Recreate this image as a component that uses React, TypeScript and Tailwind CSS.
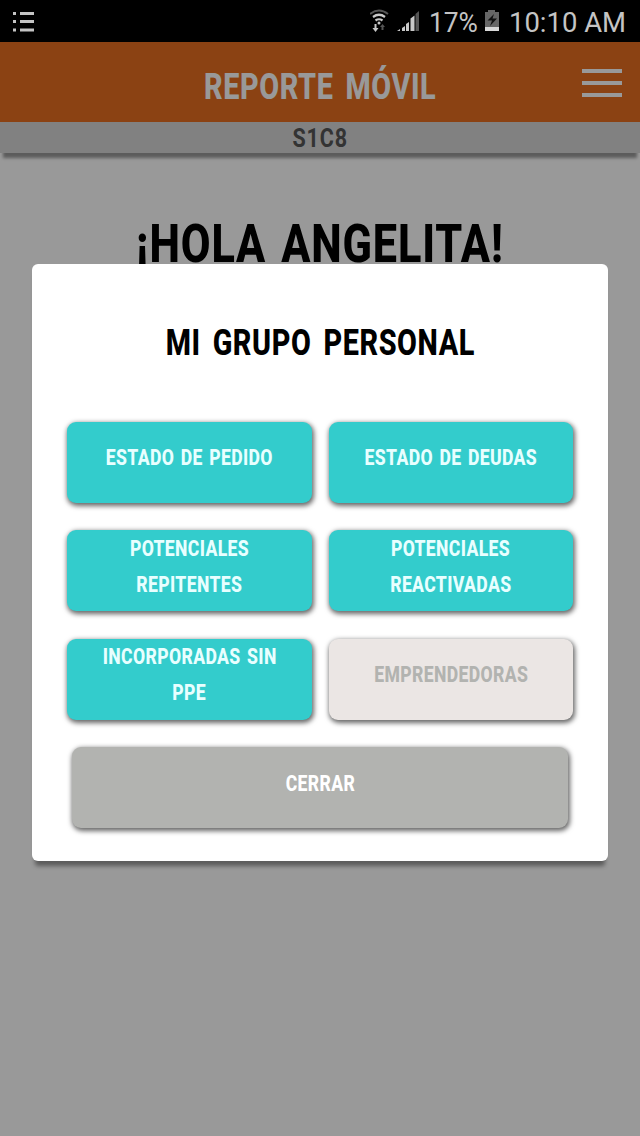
import clsx from "clsx";

type MenuOption = {
  lines: string[];
  disabled?: boolean;
};

const options: MenuOption[] = [
  { lines: ["ESTADO DE PEDIDO"] },
  { lines: ["ESTADO DE DEUDAS"] },
  { lines: ["POTENCIALES", "REPITENTES"] },
  { lines: ["POTENCIALES", "REACTIVADAS"] },
  { lines: ["INCORPORADAS SIN", "PPE"] },
  { lines: ["EMPRENDEDORAS"], disabled: true },
];

const buttonShadow = "shadow-[1px_2px_5px_1px_rgba(0,0,0,0.6)]";

// Condensed look: narrow glyphs with wider gaps between words
const headingText = "scale-x-80 tracking-[0.02em] [word-spacing:0.15em] whitespace-nowrap";
const buttonText = "scale-x-80 tracking-[0.02em] [word-spacing:0.1em] whitespace-nowrap";

function StatusBar() {
  return (
    <div className="flex h-[42px] items-center bg-black text-[#c4c4c4]">
      <svg className="ml-3" width="24" height="42" viewBox="0 0 24 42" fill="currentColor">
        <path d="M1 12h3v3H1zM8 12h14v3H8zM1 20h3v3H1zM8 20h14v3H8zM1 28.500h3v3H1zM8 28.500h14v3H8z" />
      </svg>
      <div className="ml-auto flex items-center">
        <svg width="20" height="42" viewBox="0 0 20 42" fill="none">
          <path d="M0 14q9-7 18 0" stroke="#555" strokeWidth="2" />
          <path d="M3 17q6-4.500 12 0" stroke="#c8c8c8" strokeWidth="2.200" />
          <path d="M5.500 20.500q3.500-2.500 7 0" stroke="#c8c8c8" strokeWidth="2.200" />
          <circle cx="9" cy="23" r="1.500" fill="#c8c8c8" />
          <path d="M4.500 24h2v4h2l-3 4-3-4h2z" fill="#c8c8c8" />
          <path d="M13.500 30h-2v-3H10l2.500-3 2.500 3h-1.500z" fill="#555" />
        </svg>
        <svg className="ml-[7px]" width="23" height="42" viewBox="0 0 23 42" fill="#c8c8c8">
          <path d="M0 31l3-2v2zM5 28l3-2v5H5zM9 24l3-2v9H9zM13.500 18.500l4-3v15.500h-4z" />
          <path d="M18.500 14l3.500-3v20h-3.500z" fill="#555" />
        </svg>
        <span className="ml-[9px] w-[52px] pt-[3px] text-[28px] leading-[39px]">
          <span className="inline-block origin-left scale-x-[0.94] whitespace-nowrap">17%</span>
        </span>
        <svg className="ml-[3px]" width="16" height="42" viewBox="0 0 16 42">
          <path d="M4 10h7v2h4v19H1V12h3z" fill="#666" />
          <path d="M1 27h14v4H1z" fill="#d8d8d8" />
          <path d="M10 14l-6.500 6.500H8L6 26l7-7.500H8.500z" fill="#111" />
        </svg>
        <span className="ml-[9px] w-[131px] pt-[3px] text-[28px] leading-[39px]">
          <span className="inline-block origin-left scale-x-[0.98] whitespace-nowrap">10:10 AM</span>
        </span>
      </div>
    </div>
  );
}

function Header() {
  return (
    <header className="relative flex h-20 items-center justify-center bg-[#e86e20]">
      <h1 className={clsx("pt-[10px] text-[36px] leading-none font-extrabold text-white", headingText)}>
        REPORTE MÓVIL
      </h1>
      <button className="absolute top-[27px] right-[18px] flex w-10 flex-col gap-2" aria-label="Menú">
        <span className="h-1 bg-white" />
        <span className="h-1 bg-white" />
        <span className="h-1 bg-white" />
      </button>
    </header>
  );
}

function OptionButton({ lines, disabled }: MenuOption) {
  return (
    <button
      disabled={disabled}
      className={clsx(
        "flex h-[81px] flex-col items-center rounded-[9px] text-[22px] leading-9 font-extrabold",
        buttonShadow,
        lines.length === 1 ? "pt-[18px]" : "pt-[0.5px]",
        disabled ? "bg-[#ebe6e4] text-[#b2b3b0]" : "bg-[#33cccc] text-[#e8ffff]",
      )}
    >
      {lines.map((line) => (
        <span key={line} className={buttonText}>
          {line}
        </span>
      ))}
    </button>
  );
}

function GroupModal() {
  return (
    <div className="mx-8 mt-[222px] h-[597px] rounded-md bg-white px-[35px] shadow-[0_8px_4px_-3px_rgba(0,0,0,0.4)]">
      <h2 className="flex justify-center pt-[61px] text-[36px] leading-9 font-extrabold text-black">
        <span className={headingText}>MI GRUPO PERSONAL</span>
      </h2>
      <div className="mt-[61px] grid grid-cols-2 gap-x-[17px] gap-y-[27.3px]">
        {options.map((option) => (
          <OptionButton key={option.lines.join(" ")} {...option} />
        ))}
      </div>
      <button
        className={clsx(
          "mx-auto mt-[27.3px] flex h-[81px] w-[496px] justify-center rounded-[9px] bg-[#b2b3b0] pt-[19px] text-[22px] leading-9 font-extrabold text-white",
          buttonShadow,
        )}
      >
        <span className={buttonText}>CERRAR</span>
      </button>
    </div>
  );
}

export default function App() {
  return (
    <div className="h-[1136px] w-[640px] overflow-hidden bg-white font-['Roboto',sans-serif]">
      <StatusBar />
      <div className="relative h-[1094px]">
        <Header />
        <div className="flex h-[31px] justify-center bg-[#d8d8d8] pt-px text-[25px] leading-8 font-bold text-[#555] shadow-[0_8px_3px_-3px_rgba(0,0,0,0.4)]">
          <span className="scale-x-[0.86] tracking-[0.04em]">S1C8</span>
        </div>
        <p className="mt-[64px] flex justify-center text-[54px] leading-[54px] font-extrabold text-black">
          <span className="scale-x-80 tracking-[0.02em] [word-spacing:0.08em] whitespace-nowrap">¡HOLA ANGELITA!</span>
        </p>
        <div className="absolute inset-0 flow-root bg-black/40">
          <GroupModal />
        </div>
      </div>
    </div>
  );
}
